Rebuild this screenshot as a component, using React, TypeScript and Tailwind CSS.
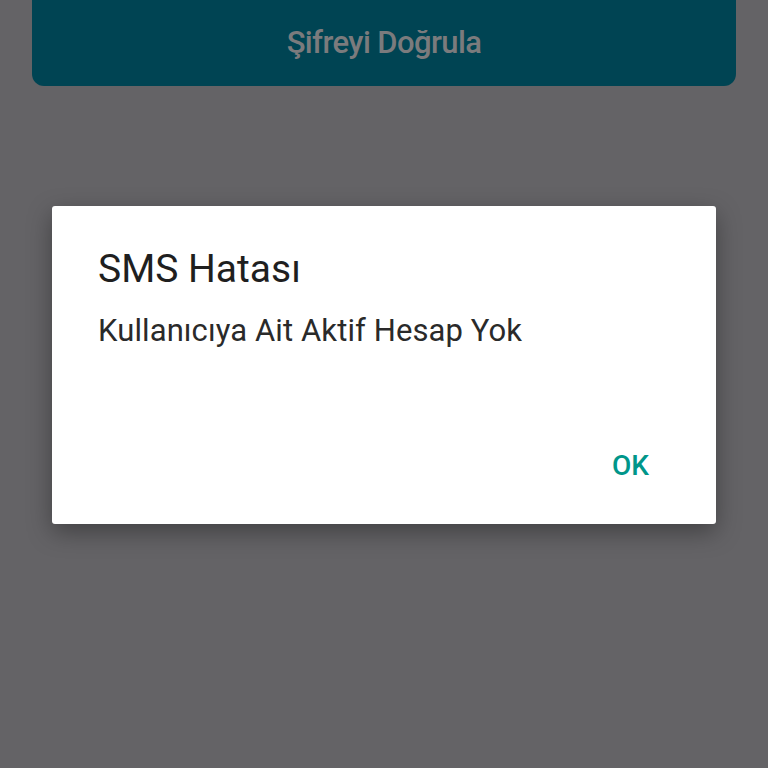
export default function App() {
  return (
    <div
      className="relative h-[768px] w-[768px] overflow-hidden bg-[#646366]"
      style={{ fontFamily: "Roboto, 'Noto Sans', sans-serif" }}
    >
      <div className="px-8">
        <button
          type="button"
          className="mt-[-12px] flex h-[98px] w-full items-center justify-center rounded-[12px] bg-[#004453] pt-[12px] text-[31px] font-medium tracking-[-0.6px] text-[#7b7b7d]"
        >
          Şifreyi Doğrula
        </button>
      </div>

      <div className="absolute left-[52px] top-[206px] flex h-[318px] w-[664px] flex-col rounded-[3px] bg-white px-[46px] shadow-[0_8px_24px_rgba(0,0,0,0.35)]">
        <h2 className="mt-[40px] text-[39px] leading-[46px] text-[#1f1f1f]">SMS Hatası</h2>
        <p className="mt-[20px] text-[31px] leading-[38px] tracking-[0.1px] text-[#2a2a2a]">
          Kullanıcıya Ait Aktif Hesap Yok
        </p>
        <div className="mt-auto mb-[40px] flex justify-end">
          <button
            type="button"
            className="mr-[21px] text-[28px] font-medium leading-[36px] text-[#00968a]"
          >
            OK
          </button>
        </div>
      </div>
    </div>
  );
}
